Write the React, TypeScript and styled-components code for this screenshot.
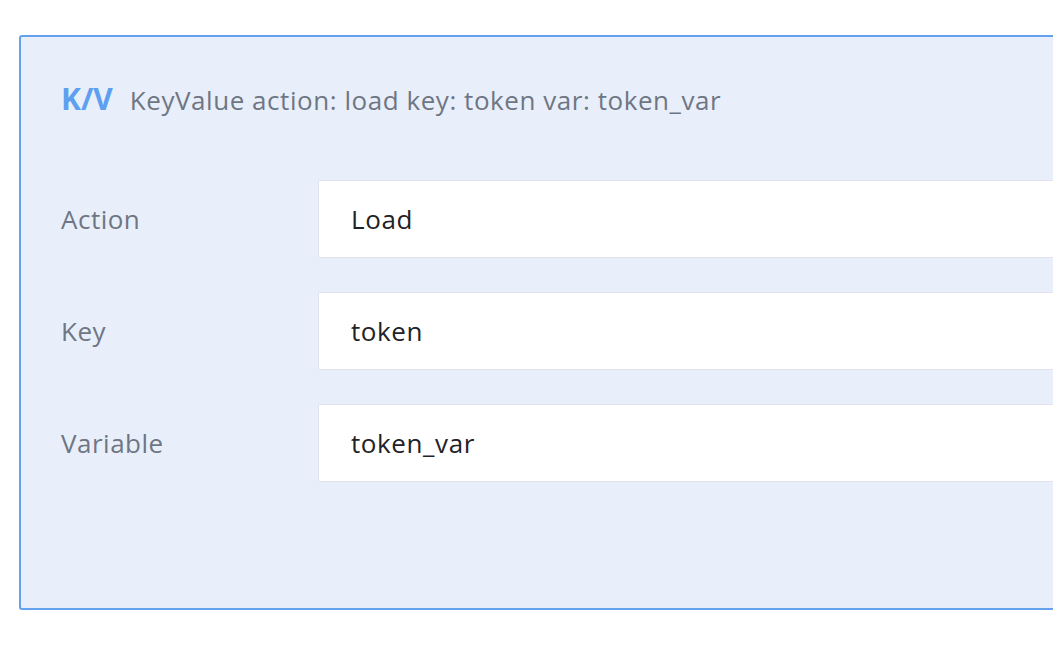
import React from "react"
import styled, { createGlobalStyle } from "styled-components"

const GlobalStyle = createGlobalStyle`
	html, body {
		margin: 0;
		padding: 0;
		background: #ffffff;
		font-family: "Open Sans", Lato, sans-serif;
		overflow: hidden;
	}
`

const Page = styled.div`
	width: 1053px;
	height: 646px;
	padding: 35px 0 0 19px;
	box-sizing: border-box;
	overflow: hidden;
`

const Panel = styled.section`
	width: 1200px;
	height: 575px;
	box-sizing: border-box;
	background: #e8effb;
	border: 2px solid #64a2ee;
	border-radius: 3px;
	padding: 42px 0 0 40px;
	display: flex;
	flex-direction: column;
`

const Header = styled.div`
	display: flex;
	align-items: baseline;
	gap: 17px;
	height: 40px;
	line-height: 40px;
`

const Badge = styled.span`
	font-size: 30px;
	font-weight: 700;
	color: #5e9ff0;
`

const Summary = styled.span`
	font-size: 26px;
	letter-spacing: 0.55px;
	color: #6f7683;
`

const Fields = styled.div`
	margin-top: 61px;
	display: flex;
	flex-direction: column;
	gap: 34px;
`

const Row = styled.div`
	display: grid;
	grid-template-columns: 257px 1fr;
	align-items: center;
`

const Label = styled.label`
	font-size: 26px;
	letter-spacing: 0.5px;
	color: #6f7683;
`

const Field = styled.div`
	height: 78px;
	box-sizing: border-box;
	background: #ffffff;
	border: 1px solid #dfe4ec;
	border-radius: 2px;
	padding: 0 32px;
	display: flex;
	align-items: center;
	font-size: 26px;
	letter-spacing: 0.6px;
	color: #1f2328;
`

const fields = [
	{ label: "Action", value: "Load" },
	{ label: "Key", value: "token" },
	{ label: "Variable", value: "token_var" },
]

const App = () => (
	<Page>
		<GlobalStyle />
		<Panel>
			<Header>
				<Badge>K/V</Badge>
				<Summary>KeyValue action: load key: token var: token_var</Summary>
			</Header>
			<Fields>
				{fields.map((f) => (
					<Row key={f.label}>
						<Label>{f.label}</Label>
						<Field>{f.value}</Field>
					</Row>
				))}
			</Fields>
		</Panel>
	</Page>
)

export default App
